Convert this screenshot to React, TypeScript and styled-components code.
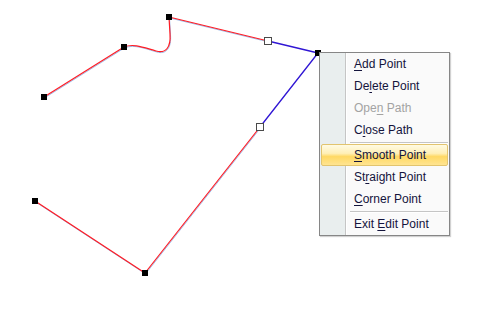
import React from 'react';
import styled, { createGlobalStyle } from 'styled-components';

type MenuEntry =
  | { kind: 'item'; label: string; accessKey: number; disabled?: boolean; active?: boolean }
  | { kind: 'separator' };

const menuEntries: MenuEntry[] = [
  { kind: 'item', label: 'Add Point', accessKey: 0 },
  { kind: 'item', label: 'Delete Point', accessKey: 2 },
  { kind: 'item', label: 'Open Path', accessKey: 3, disabled: true },
  { kind: 'item', label: 'Close Path', accessKey: 1 },
  { kind: 'separator' },
  { kind: 'item', label: 'Smooth Point', accessKey: 0, active: true },
  { kind: 'item', label: 'Straight Point', accessKey: 2 },
  { kind: 'item', label: 'Corner Point', accessKey: 0 },
  { kind: 'separator' },
  { kind: 'item', label: 'Exit Edit Point', accessKey: 5 },
];

const vertices = [
  [44, 97],
  [124, 47],
  [169, 17],
  [318, 53],
  [145, 273],
  [35, 201],
];

const handles = [
  [268, 41],
  [260, 127],
];

// red part of the path, the blue part is the segment being edited
const redPath = 'M44 97 L124 47 C134 43 145 48 156 51 C166 54 171 47 170 34 L169 17 L268 41 M260 127 L145 273 L35 201';

const GlobalStyle = createGlobalStyle`
  html, body {
    margin: 0;
    padding: 0;
    background: #ffffff;
  }
`;

const Label = ({ text, accessKey }: { text: string; accessKey: number }) => (
  <S.LabelText>
    {text.slice(0, accessKey)}
    <S.AccessKey>{text[accessKey]}</S.AccessKey>
    {text.slice(accessKey + 1)}
  </S.LabelText>
);

const PathDrawing = () => (
  <S.Drawing width="483" height="318" viewBox="0 0 483 318">
    <g fill="none" strokeLinecap="round" strokeLinejoin="round">
      <path d={redPath} stroke="#9dbbe8" strokeWidth="1" transform="translate(0.5 0.9)" />
      <path d={redPath} stroke="#ff1c24" strokeWidth="1.2" />
      <path d="M268 41 L318 53 L260 127" stroke="#3016d4" strokeWidth="1.3" />
    </g>
    {vertices.map(([x, y]) => (
      <rect key={`${x}-${y}`} x={x - 3} y={y - 3} width="6" height="6" fill="#000000" />
    ))}
    {handles.map(([x, y]) => (
      <rect
        key={`${x}-${y}`}
        x={x - 3.5}
        y={y - 3.5}
        width="7"
        height="7"
        fill="#ffffff"
        stroke="#4a4a4a"
        strokeWidth="1"
      />
    ))}
  </S.Drawing>
);

const App = () => {
  return (
    <>
      <GlobalStyle />
      <S.Canvas>
        <PathDrawing />
        <S.Menu>
          {menuEntries.map((entry, index) =>
            entry.kind === 'separator' ? (
              <S.Separator key={index} />
            ) : (
              <S.Item key={index} $disabled={entry.disabled} $active={entry.active}>
                <Label text={entry.label} accessKey={entry.accessKey} />
              </S.Item>
            ),
          )}
        </S.Menu>
      </S.Canvas>
    </>
  );
};

export default App;

const S = {
  Canvas: styled.div`
    position: relative;
    width: 483px;
    height: 318px;
    overflow: hidden;
    background: #ffffff;
  `,

  Drawing: styled.svg`
    display: block;
  `,

  Menu: styled.div`
    position: absolute;
    left: 319px;
    top: 52px;
    width: 129px;

    display: flex;
    flex-direction: column;

    border: 1px solid #868686;
    background: linear-gradient(
      to right,
      #e9eeee 0,
      #e9eeee 25px,
      #c5c5c5 25px,
      #c5c5c5 26px,
      #ffffff 26px,
      #ffffff 27px,
      #fafafa 27px
    );
    box-shadow: 1px 1px 1px rgba(0, 0, 0, 0.18);
  `,

  Item: styled.div<{ $disabled?: boolean; $active?: boolean }>`
    display: flex;
    align-items: center;

    height: 22px;
    margin: 0 1px;
    padding-left: 32px;
    box-sizing: border-box;

    font-family: 'Liberation Sans', Arial, sans-serif;
    font-size: 12px;
    color: ${({ $disabled }) => ($disabled ? '#a3a3a3' : '#14143c')};

    border: 1px solid ${({ $active }) => ($active ? '#e2c46e' : 'transparent')};
    border-radius: 2px;
    background: ${({ $active }) =>
      $active
        ? 'linear-gradient(to bottom, #fffbe4 0%, #ffefb6 42%, #ffd964 58%, #ffe491 100%)'
        : 'transparent'};
  `,

  LabelText: styled.span`
    white-space: pre;
  `,

  AccessKey: styled.span`
    text-decoration: underline;
    text-underline-offset: 2px;
  `,

  Separator: styled.div`
    height: 3px;
    margin-left: 30px;
    margin-right: 1px;

    display: flex;
    flex-direction: column;
    justify-content: center;

    &::before {
      content: '';
      height: 1px;
      background: #c5c5c5;
    }

    &::after {
      content: '';
      height: 1px;
      background: #ffffff;
    }
  `,
};
